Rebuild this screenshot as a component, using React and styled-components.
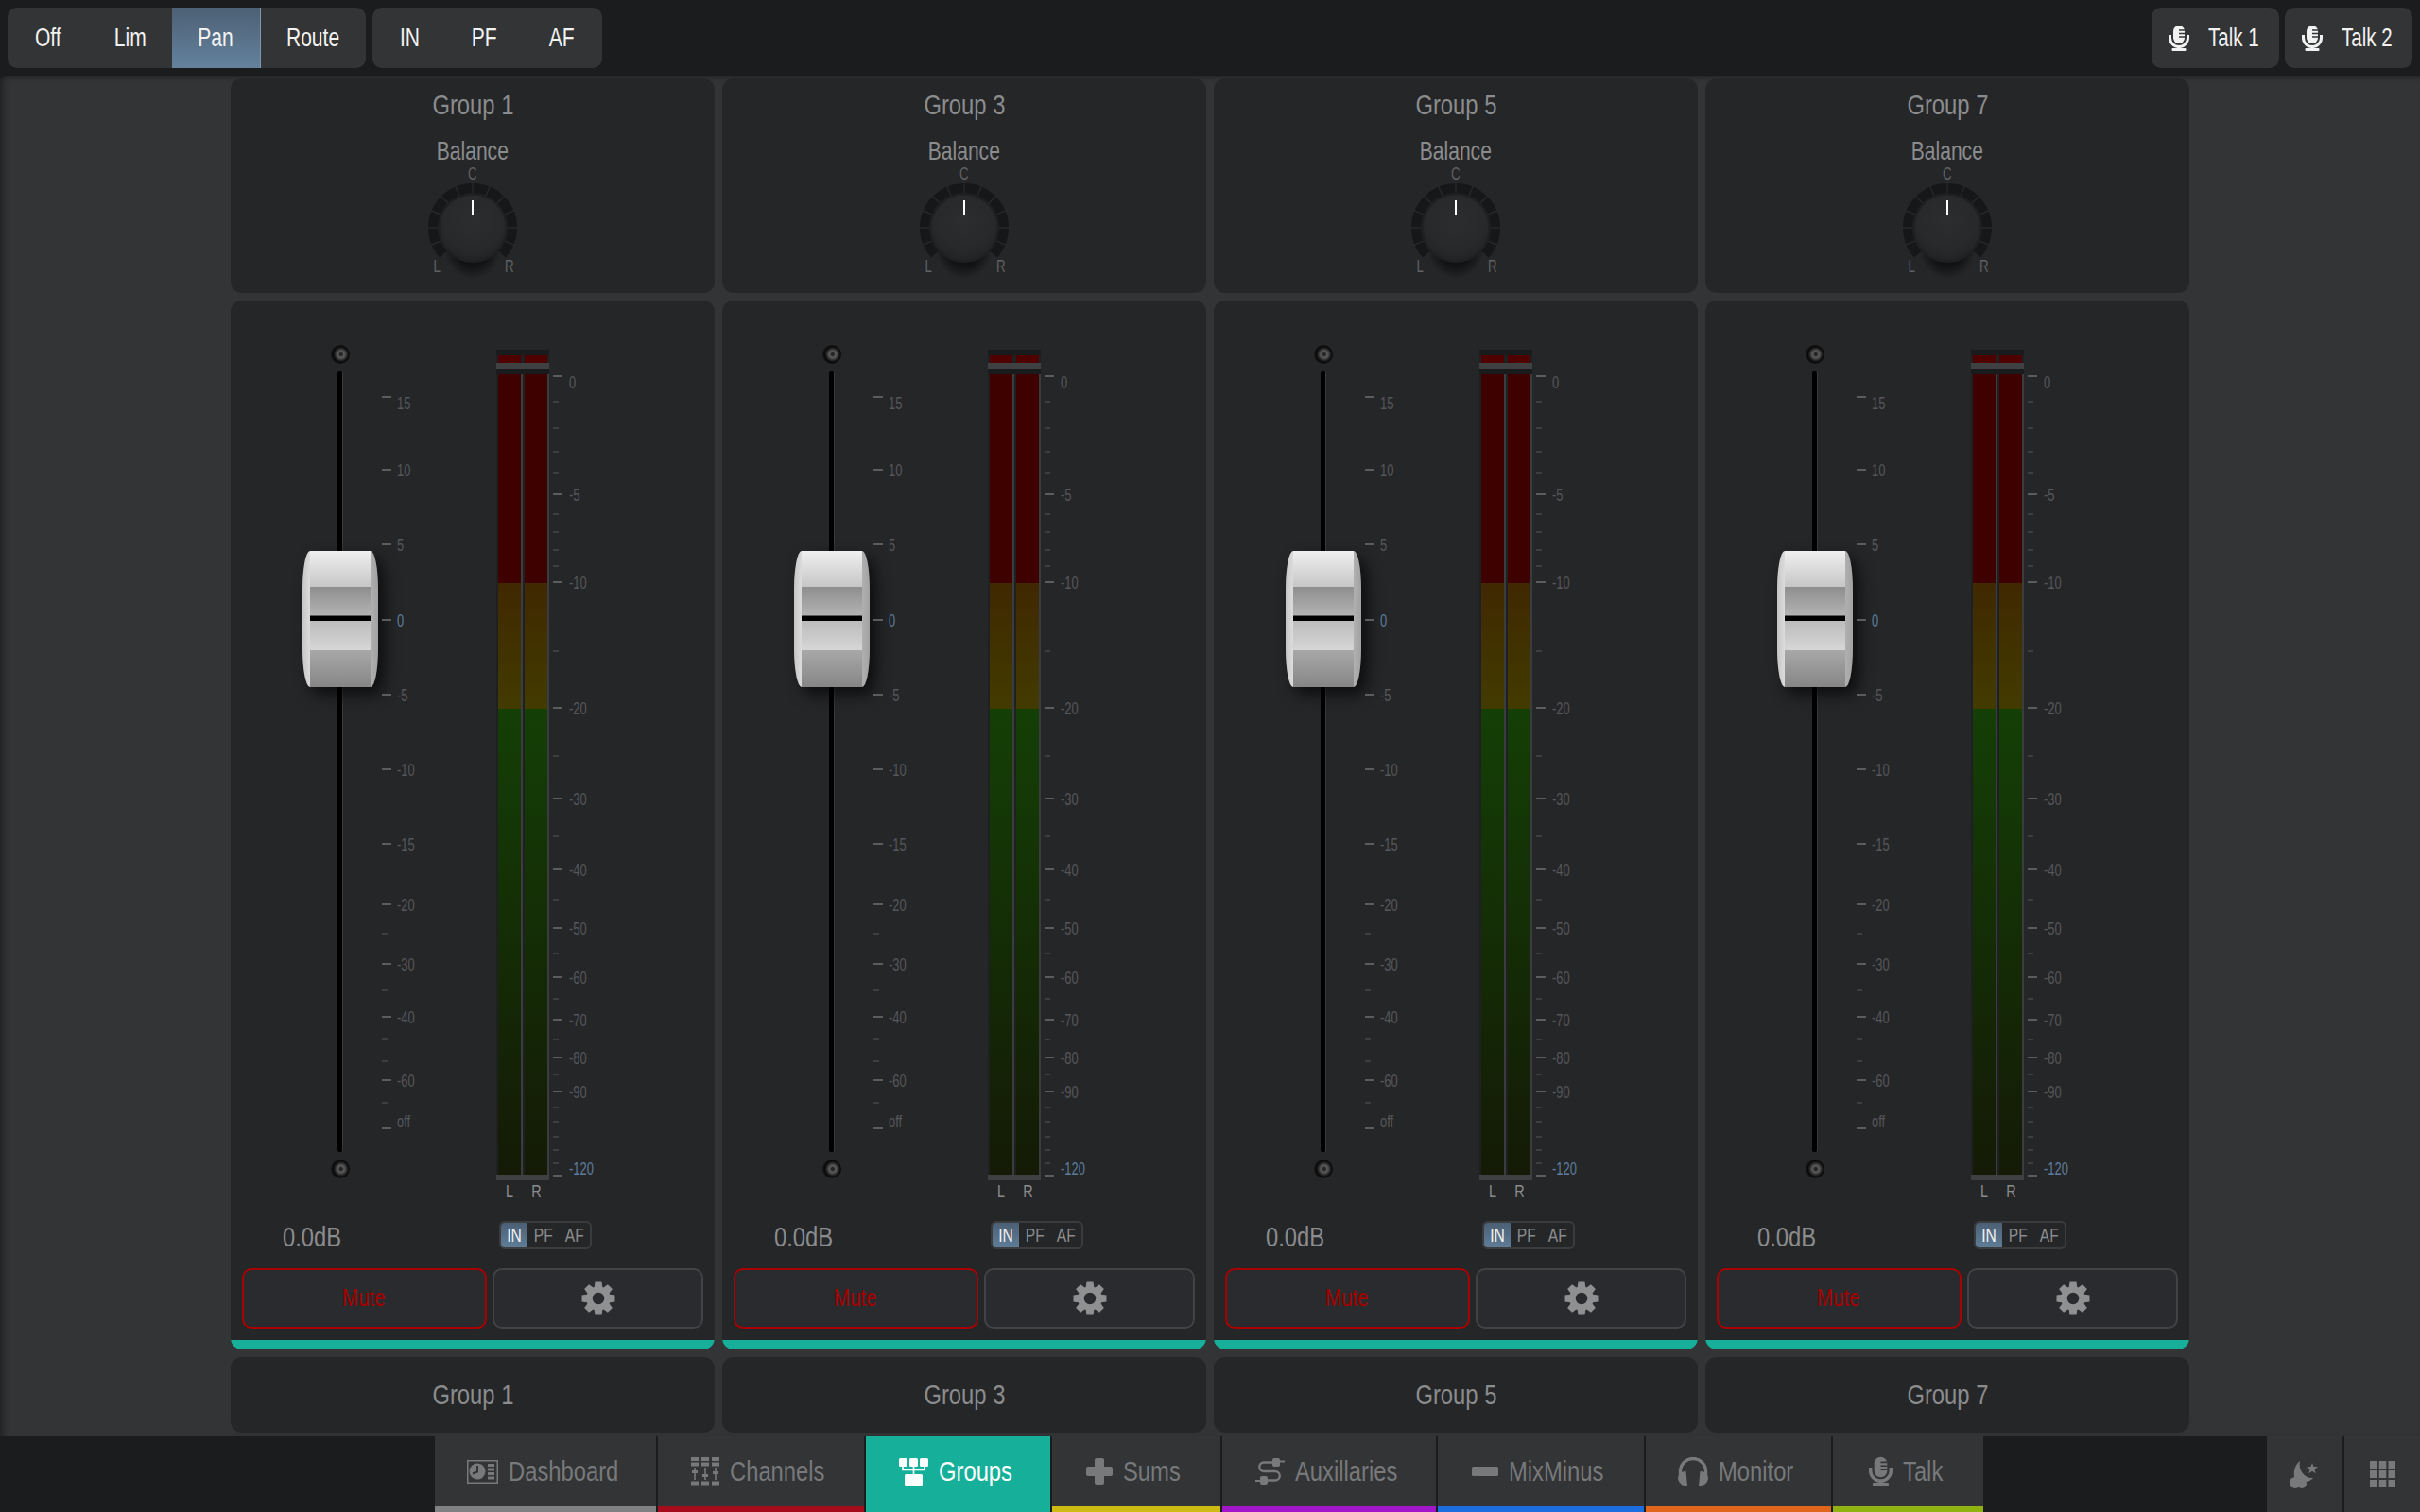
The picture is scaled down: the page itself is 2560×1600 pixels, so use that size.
import React from "react";
import styled, { createGlobalStyle } from "styled-components";

const FONT = `"Liberation Sans", Arial, sans-serif`;

const Global = createGlobalStyle`
  html, body { margin: 0; padding: 0; background: #323436; }
  * { box-sizing: border-box; }
  body { font-family: ${FONT}; }
`;

const Page = styled.div`
  width: 2560px;
  height: 1600px;
  display: flex;
  flex-direction: column;
  overflow: hidden;
`;

/* The reference uses a narrow grotesque: the same drawing squeezed horizontally. */
const Narrow = styled.span`
  display: inline-block;
  white-space: nowrap;
  width: ${(p) => (p.$w ? `${p.$w}px` : "auto")};
  transform: scaleX(${(p) => p.$x || 0.82});
  transform-origin: ${(p) => (p.$w ? "left" : "center")} center;
`;

const TopBar = styled.header`
  height: 80px;
  flex: none;
  display: flex;
  justify-content: space-between;
  padding: 8px;
  background: #1b1c1e;
`;
const BarGroup = styled.div`
  display: flex;
  gap: ${(p) => p.$gap}px;
`;
const Segment = styled.div`
  display: flex;
  height: 64px;
  background: #323436;
  border-radius: 10px;
  overflow: hidden;
`;
const SegmentButton = styled.div`
  width: ${(p) => p.$w}px;
  display: flex;
  align-items: center;
  justify-content: center;
  font-size: 27px;
  color: #f2f2f2;
  background: ${(p) => (p.$active ? "linear-gradient(180deg,#4c6074,#64829e)" : "transparent")};
  border-right: ${(p) => (p.$active ? "1px solid #7f97ad" : "none")};
`;
const TalkButton = styled.div`
  width: 135px;
  height: 64px;
  display: flex;
  align-items: center;
  gap: 20px;
  padding-left: 18px;
  background: #323436;
  border-radius: 10px;
  font-size: 27px;
  color: #f2f2f2;
`;

const Mixer = styled.main`
  flex: 1;
  display: flex;
  justify-content: center;
  gap: 8px;
  padding: 3px 0 4px;
  background: #323436;
  box-shadow: inset 8px 0 10px -6px rgba(0, 0, 0, 0.45), inset 0 6px 6px -5px rgba(0, 0, 0, 0.35);
`;
const Strip = styled.section`
  width: 512px;
  display: flex;
  flex-direction: column;
  gap: 8px;
`;
const HeadCard = styled.div`
  height: 227px;
  display: flex;
  flex-direction: column;
  align-items: center;
  padding-top: 12px;
  background: #252628;
  border-radius: 12px;
`;
const GroupTitle = styled.div`
  font-size: 29px;
  line-height: 32px;
  color: #8b8c8e;
`;
const BalanceLabel = styled.div`
  margin-top: 18px;
  font-size: 27px;
  line-height: 30px;
  color: #8b8c8e;
`;
const KnobBox = styled.div`
  position: relative;
  margin-top: 6px;
  width: 120px;
  height: 120px;
`;
const KnobMark = styled.span`
  position: absolute;
  left: ${(p) => p.$x}px;
  top: ${(p) => p.$y}px;
  width: 20px;
  margin-left: -10px;
  text-align: center;
  font-size: 19px;
  line-height: 18px;
  color: #5f6163;
`;

const ChannelCard = styled.div`
  flex: none;
  height: 1110px;
  display: flex;
  flex-direction: column;
  background: #252628;
  border-radius: 12px;
  overflow: hidden;
`;
const ChannelBody = styled.div`
  flex: 1;
  display: flex;
  align-items: flex-start;
`;
const FaderColumn = styled.div`
  position: relative;
  width: 80px;
  margin: 47px 0 0 76px;
  display: flex;
  flex-direction: column;
  align-items: center;
  gap: 8px;
`;
const Screw = styled.div`
  width: 20px;
  height: 20px;
  border-radius: 50%;
  background: radial-gradient(circle at 54% 50%, #262626 0 1.5px, #5c5c5c 3px, #444 5px, #222 6.5px, #090909 8.5px, #141414 10px);
`;
const Track = styled.div`
  width: 6px;
  height: 826px;
  background: #000;
  border-right: 1px solid #37393b;
  border-radius: 2px;
`;
const Handle = styled.div`
  position: absolute;
  left: 0;
  top: 218px;
  width: 80px;
  height: 144px;
  display: flex;
  border-radius: 8px / 40px;
  box-shadow: 7px 8px 16px rgba(0, 0, 0, 0.65);
`;
const HandleSide = styled.div`
  width: 8px;
  background: ${(p) => (p.$right ? "linear-gradient(90deg,#b0b0b0,#a2a2a2)" : "linear-gradient(90deg,#c6c6c6,#dcdcdc)")};
  border-radius: ${(p) => (p.$right ? "0 8px 8px 0 / 0 40px 40px 0" : "8px 0 0 8px / 40px 0 0 40px")};
`;
const HandleFace = styled.div`
  flex: 1;
  display: flex;
  flex-direction: column;
`;
const HandleBand = styled.div`
  height: ${(p) => p.$h}px;
  background: linear-gradient(180deg, ${(p) => p.$from}, ${(p) => p.$to});
`;
const HandleSlit = styled.div`
  height: 5px;
  background: #000;
  box-shadow: 0 -1px 0 #5c5c5c, 0 1px 0 #8a8a8a;
`;

const Scale = styled.div`
  position: relative;
  flex: none;
  width: ${(p) => p.$w}px;
  height: 900px;
  margin-left: 4px;
  margin-top: ${(p) => p.$top}px;
`;
const ScaleTick = styled.i`
  position: absolute;
  left: 0;
  height: 2px;
  width: ${(p) => (p.$major ? 10 : 6)}px;
  background: ${(p) => (p.$major ? "#5a5c5e" : "#3c3e40")};
`;
const ScaleLabel = styled.span`
  position: absolute;
  left: ${(p) => p.$left}px;
  font-size: 19px;
  line-height: 18px;
  white-space: nowrap;
  transform: scaleX(0.68);
  transform-origin: left center;
  color: ${(p) => (p.$blue ? "#5d7d9c" : "#55575a")};
`;

const MeterColumn = styled.div`
  flex: none;
  width: 56px;
  margin: 52px 0 0 81px;
  display: flex;
  flex-direction: column;
`;
const MeterBars = styled.div`
  display: flex;
`;
const MeterChannel = styled.div`
  width: 28px;
  display: flex;
  flex-direction: column;
  background: #1e2022;
`;
const PeakStrip = styled.div`
  height: ${(p) => p.$h}px;
  background: ${(p) => p.$c};
  margin: ${(p) => (p.$inset ? "0 2px" : "0")};
`;
const MeterBar = styled.div`
  height: 847px;
  margin-left: 2px;
  background: linear-gradient(180deg, #3f0000 0, #3f0000 26.1%, #402800 26.1%, #423b00 41.8%, #143f06 41.8%, #141a06 100%);
  border-right: 2px solid #3a3c3e;
  background-clip: padding-box;
`;
const MeterNames = styled.div`
  display: flex;
  padding-top: 2px;
  font-size: 18px;
  line-height: 20px;
  color: #8b8c8e;
`;
const MeterName = styled.span`
  width: 28px;
  text-align: center;
`;

const ValueRow = styled.div`
  height: 30px;
  margin-bottom: 20px;
  display: flex;
  align-items: center;
`;
const GainValue = styled.div`
  width: 229px;
  margin-left: 55px;
  font-size: 29px;
  line-height: 34px;
  padding-top: 4px;
  color: #8b8c8e;
`;
const SourceSwitch = styled.div`
  width: 98px;
  height: 30px;
  display: flex;
  border: 2px solid #3a3c3e;
  border-radius: 6px;
  overflow: hidden;
`;
const SourceOption = styled.div`
  flex: ${(p) => (p.$active ? "0 0 28px" : "1")};
  display: flex;
  align-items: center;
  justify-content: center;
  font-size: 20px;
  color: ${(p) => (p.$active ? "#f2f2f2" : "#8b8c8e")};
  background: ${(p) => (p.$active ? "linear-gradient(180deg,#4c6074,#5f7d98)" : "transparent")};
`;
const ButtonRow = styled.div`
  height: 64px;
  display: flex;
  gap: 6px;
  padding: 0 12px;
  margin-bottom: 12px;
`;
const OutlineButton = styled.div`
  width: ${(p) => p.$w}px;
  display: flex;
  align-items: center;
  justify-content: center;
  padding-bottom: ${(p) => (p.$text ? 2 : 0)}px;
  padding-right: ${(p) => (p.$text ? 2 : 0)}px;
  background: #2a2b2e;
  border: 2px solid ${(p) => p.$line};
  border-radius: 10px;
  font-size: 26px;
  color: #a40000;
`;
const TealBar = styled.div`
  height: 10px;
  flex: none;
  background: #17ae9a;
`;
const FootCard = styled.div`
  height: 80px;
  display: flex;
  align-items: center;
  justify-content: center;
  background: #252628;
  border-radius: 12px;
  font-size: 29px;
  color: #8b8c8e;
`;

const Nav = styled.nav`
  height: 80px;
  flex: none;
  display: flex;
  gap: 2px;
  padding-left: 460px;
  background: #1b1c1e;
`;
const NavItem = styled.div`
  width: ${(p) => p.$w}px;
  display: flex;
  align-items: center;
  justify-content: center;
  gap: 11px;
  padding-right: ${(p) => (p.$line ? 6 : 0)}px;
  margin-left: ${(p) => (p.$push ? "auto" : "0")};
  font-size: 29px;
  color: ${(p) => (p.$active ? "#ffffff" : "#77797b")};
  background: ${(p) => (p.$active ? "#16b09a" : "#323436")};
  border-bottom: ${(p) => (p.$line ? `6px solid ${p.$line}` : "none")};
`;

/* drawings */
const MicIcon = ({ w = 22, h = 27, slot = "#323436" }) => (
  <svg width={w} height={h} viewBox="0 0 22 27" fill="currentColor" style={{ flex: "none" }}>
    <rect x="5" y="0" width="12" height="19" rx="6" />
    <path d="M11 5h6M11 8.500h6M11 12h6" stroke={slot} strokeWidth="1.400" />
    <path d="M1.500 10v3a9.500 9.500 0 0 0 19 0v-3" fill="none" stroke="currentColor" strokeWidth="3" />
    <rect x="9.500" y="21" width="3" height="3" />
    <rect x="3.500" y="24" width="15" height="3" rx="1" />
  </svg>
);
const DashboardIcon = () => (
  <svg width="33" height="25" viewBox="0 0 33 25" fill="currentColor">
    <rect x="0.750" y="0.750" width="31.500" height="23.500" fill="none" stroke="currentColor" strokeWidth="1.500" />
    <circle cx="11" cy="12" r="8.500" />
    <path d="M11 6v6.500l-5 2" fill="none" stroke="#323436" strokeWidth="2" />
    <path d="M22 4h7v3h-7zM22 8.500h7v3h-7zM22 13h7v3h-7zM22 17.500h7v3h-7z" />
  </svg>
);
const ChannelsIcon = () => (
  <svg width="30" height="30" viewBox="0 0 30 30" fill="currentColor">
    <path d="M0 0h8v4H0zM11 0h8v4h-8zM22 0h8v4h-8zM0 5.500h8v4H0zM11 5.500h8v4h-8zM22 5.500h8v4h-8zM0 25.500h8v4H0zM11 25.500h8v4h-8zM22 25.500h8v4h-8z" />
    <path d="M3.200 11h1.600v13H3.200zM14.200 11h1.600v13h-1.600zM25.200 11h1.600v13h-1.600z" />
    <path d="M1 14h6v3H1zM12 18h6v3h-6zM23 15h6v3h-6z" />
  </svg>
);
const GroupsIcon = () => (
  <svg width="31" height="29" viewBox="0 0 31 29" fill="currentColor">
    <rect x="0" y="0" width="9" height="9" rx="1.500" />
    <rect x="11" y="0" width="9" height="9" rx="1.500" />
    <rect x="22" y="0" width="9" height="9" rx="1.500" />
    <path d="M4 9v3.500h23V9M15.500 9v8" fill="none" stroke="currentColor" strokeWidth="1.600" />
    <rect x="6" y="17" width="19" height="12" rx="1.500" />
  </svg>
);
const PlusIcon = () => (
  <svg width="28" height="28" viewBox="0 0 28 28" fill="currentColor">
    <path d="M11 0h6a2 2 0 0 1 2 2v7h7a2 2 0 0 1 2 2v6a2 2 0 0 1-2 2h-7v7a2 2 0 0 1-2 2h-6a2 2 0 0 1-2-2v-7H2a2 2 0 0 1-2-2v-6a2 2 0 0 1 2-2h7V2a2 2 0 0 1 2-2z" />
  </svg>
);
const AuxIcon = () => (
  <svg width="31" height="28" viewBox="0 0 31 28" fill="currentColor">
    <path d="M20 4.500H9a4.700 4.700 0 0 0 0 9.500h12a4.700 4.700 0 0 1 0 9.500H11" fill="none" stroke="currentColor" strokeWidth="2.400" />
    <rect x="18" y="0" width="8" height="9" rx="2" />
    <rect x="25" y="2.500" width="6" height="2" />
    <rect x="5" y="19" width="8" height="9" rx="2" />
    <rect x="0" y="23" width="6" height="2" />
  </svg>
);
const MinusIcon = () => (
  <svg width="28" height="10" viewBox="0 0 28 10" fill="currentColor">
    <rect width="28" height="10" rx="1.500" />
  </svg>
);
const HeadphonesIcon = () => (
  <svg width="32" height="31" viewBox="0 0 32 31" fill="currentColor">
    <path d="M2.500 19v-4a13.500 13.500 0 0 1 27 0v4" fill="none" stroke="currentColor" strokeWidth="3.400" />
    <path d="M8.500 15l1.500 15H7c-4-.5-7-4.500-7-8 0-3.500 3.500-7 8.500-7zM23.500 15l-1.500 15h3c4-.5 7-4.500 7-8 0-3.500-3.500-7-8.500-7z" />
  </svg>
);
const MoonIcon = () => (
  <svg width="32" height="29" viewBox="0 0 32 29" fill="currentColor">
    <path d="M11 0C6 4 4 10 5 17c3 5 10 7 16 4 2-1 3-2 4-3-9 1-16-8-14-18z" />
    <circle cx="6" cy="23" r="6" />
    <circle cx="13" cy="24" r="5" />
    <path d="M24 2l1.500 4 4.500.3-3.500 2.700 1.200 4.300-3.700-2.500-3.700 2.500L21.500 9 18 6.300l4.500-.3z" />
  </svg>
);
const GridIcon = () => (
  <svg width="27" height="28" viewBox="0 0 27 28" fill="currentColor">
    <path d="M0 0h7.500v8H0zM9.750 0h7.500v8h-7.500zM19.500 0H27v8h-7.500zM0 10h7.500v8H0zM9.750 10h7.500v8h-7.500zM19.500 10H27v8h-7.500zM0 20h7.500v8H0zM9.750 20h7.500v8h-7.500zM19.500 20H27v8h-7.500z" />
  </svg>
);
const GearIcon = () => (
  <svg width="36" height="36" viewBox="0 0 36 36" fill="#8f9092">
    {[0, 45, 90, 135, 180, 225, 270, 315].map((a) => (
      <path key={a} d="M14.500 0.500h7l1 7h-9z" transform={`rotate(${a} 18 18)`} />
    ))}
    <circle cx="18" cy="18" r="9.500" fill="none" stroke="#8f9092" strokeWidth="6.500" />
  </svg>
);
const arcPoint = (r, deg) => {
  const t = ((deg - 90) * Math.PI) / 180;
  return [60 + r * Math.cos(t), 60 + r * Math.sin(t)];
};
const KnobIcon = ({ id }) => {
  const [sx, sy] = arcPoint(41.5, -132);
  const [ex, ey] = arcPoint(41.5, 132);
  const seps = [-112.5, -90, -67.5, -45, -22.5, 0, 22.5, 45, 67.5, 90, 112.5];
  return (
    <svg width="120" height="120" viewBox="0 0 120 120">
      <defs>
        <radialGradient id={`${id}s`} cx="50%" cy="50%" r="50%">
          <stop offset="0%" stopColor="#000" stopOpacity="0.8" />
          <stop offset="60%" stopColor="#000" stopOpacity="0.5" />
          <stop offset="100%" stopColor="#000" stopOpacity="0" />
        </radialGradient>
        <radialGradient id={`${id}f`} cx="50%" cy="38%" r="65%">
          <stop offset="0%" stopColor="#2c2d2f" />
          <stop offset="70%" stopColor="#28292b" />
          <stop offset="100%" stopColor="#212224" />
        </radialGradient>
      </defs>
      <path d={`M${sx} ${sy}A41.500 41.500 0 1 1 ${ex} ${ey}`} fill="none" stroke="#161718" strokeWidth="11" />
      {seps.map((a) => {
        const [x1, y1] = arcPoint(36, a);
        const [x2, y2] = arcPoint(48, a);
        return <line key={a} x1={x1} y1={y1} x2={x2} y2={y2} stroke="#2a2b2d" strokeWidth="1.200" />;
      })}
      <ellipse cx="60" cy="82" rx="30" ry="32" fill={`url(#${id}s)`} />
      <circle cx="60" cy="60" r="37" fill="#1f2022" />
      <circle cx="60" cy="60" r="34.500" fill={`url(#${id}f)`} />
      <rect x="59" y="31" width="2" height="16" fill="#ffffff" />
    </svg>
  );
};

/* data */
const FADER_TICKS = [
  [419, "15", 7], [496, "10", 1], [575, "5", 1], [655, "0", 1, true], [734, "-5", 1], [813, "-10", 1],
  [892, "-15", 1], [956, "-20", 1], [987], [1019, "-30", 1], [1047], [1075, "-40", 1], [1098], [1122],
  [1142, "-60", 1], [1166], [1193, "off", -7],
];
const METER_TICKS = [
  [397, "0", 7], [424], [452], [477], [500], [522, "-5", 1], [543], [562], [581], [598], [615, "-10", 1],
  [688], [748, "-20", 1], [799], [844, "-30", 1], [884], [919, "-40", 1], [951], [981, "-50", 1], [1008],
  [1033, "-60", 1], [1056], [1078, "-70", 1], [1099], [1118, "-80", 1], [1136], [1154, "-90", 1], [1171],
  [1186], [1202], [1216], [1230], [1243, "-120", -7, true],
];

const ScaleMarks = ({ ticks, origin, width, top, labelLeft }) => (
  <Scale $w={width} $top={top}>
    {ticks.map(([y, label, dy, blue]) => (
      <React.Fragment key={y}>
        <ScaleTick $major={!!label} style={{ top: y - origin }} />
        {label && (
          <ScaleLabel $left={labelLeft} $blue={blue} style={{ top: y - origin + dy - 8 }}>
            {label}
          </ScaleLabel>
        )}
      </React.Fragment>
    ))}
  </Scale>
);

const MeterLane = () => (
  <MeterChannel>
    <PeakStrip $h={6} $c="#1a1b1c" />
    <PeakStrip $h={8} $c="#4f0000" $inset />
    <PeakStrip $h={6} $c="#3e4042" />
    <PeakStrip $h={6} $c="#1a1b1c" />
    <MeterBar />
    <PeakStrip $h={6} $c="#3e4042" />
  </MeterChannel>
);

const ChannelStrip = ({ name }) => (
  <Strip>
    <HeadCard>
      <GroupTitle><Narrow $x={0.82}>{name}</Narrow></GroupTitle>
      <BalanceLabel><Narrow $x={0.78}>Balance</Narrow></BalanceLabel>
      <KnobBox>
        <KnobIcon id={name.replace(" ", "")} />
        <KnobMark $x={60} $y={-6}><Narrow $x={0.7}>C</Narrow></KnobMark>
        <KnobMark $x={22} $y={92}><Narrow $x={0.7}>L</Narrow></KnobMark>
        <KnobMark $x={99} $y={92}><Narrow $x={0.7}>R</Narrow></KnobMark>
      </KnobBox>
    </HeadCard>
    <ChannelCard>
      <ChannelBody>
        <FaderColumn>
          <Screw />
          <Track />
          <Screw />
          <Handle>
            <HandleSide />
            <HandleFace>
              <HandleBand $h={38} $from="#f0f0f0" $to="#c6c6c6" />
              <HandleBand $h={31} $from="#8e8e8e" $to="#b4b4b4" />
              <HandleSlit />
              <HandleBand $h={31} $from="#bcbcbc" $to="#d6d6d6" />
              <HandleBand $h={39} $from="#a8a8a8" $to="#868686" />
            </HandleFace>
            <HandleSide $right />
          </Handle>
        </FaderColumn>
        <ScaleMarks ticks={FADER_TICKS} origin={365} width={40} top={47} labelLeft={16} />
        <MeterColumn>
          <MeterBars>
            <MeterLane />
            <MeterLane />
          </MeterBars>
          <MeterNames>
            <MeterName><Narrow $x={0.8}>L</Narrow></MeterName>
            <MeterName><Narrow $x={0.8}>R</Narrow></MeterName>
          </MeterNames>
        </MeterColumn>
        <ScaleMarks ticks={METER_TICKS} origin={370} width={50} top={52} labelLeft={17} />
      </ChannelBody>
      <ValueRow>
        <GainValue><Narrow $w={64}>0.0dB</Narrow></GainValue>
        <SourceSwitch>
          <SourceOption $active><Narrow $x={0.78}>IN</Narrow></SourceOption>
          <SourceOption><Narrow $x={0.78}>PF</Narrow></SourceOption>
          <SourceOption><Narrow $x={0.78}>AF</Narrow></SourceOption>
        </SourceSwitch>
      </ValueRow>
      <ButtonRow>
        <OutlineButton $w={259} $line="#a90000" $text><Narrow $x={0.79}>Mute</Narrow></OutlineButton>
        <OutlineButton $w={223} $line="#414345"><GearIcon /></OutlineButton>
      </ButtonRow>
      <TealBar />
    </ChannelCard>
    <FootCard><Narrow $x={0.82}>{name}</Narrow></FootCard>
  </Strip>
);

const NAV = [
  ["Dashboard", 234, 116, "#808183", <DashboardIcon />],
  ["Channels", 218, 101, "#a60d1c", <ChannelsIcon />],
  ["Groups", 195, 78, "#16b09a", <GroupsIcon />, true],
  ["Sums", 178, 61, "#cdbb14", <PlusIcon />],
  ["Auxillaries", 226, 109, "#a116c9", <AuxIcon />],
  ["MixMinus", 218, 101, "#1c6de0", <MinusIcon />],
  ["Monitor", 196, 80, "#e0661c", <HeadphonesIcon />],
  ["Talk", 159, 42, "#90b312", <MicIcon w={25} h={32} />],
];

const SEGMENTS_A = [["Off", 86], ["Lim", 88], ["Pan", 94, true], ["Route", 111]];
const SEGMENTS_B = [["IN", 78], ["PF", 80], ["AF", 85]];

export default function App() {
  const segment = ([label, w, active]) => (
    <SegmentButton key={label} $w={w} $active={active}>
      <Narrow $x={0.78}>{label}</Narrow>
    </SegmentButton>
  );
  return (
    <Page>
      <Global />
      <TopBar>
        <BarGroup $gap={7}>
          <Segment>{SEGMENTS_A.map(segment)}</Segment>
          <Segment>{SEGMENTS_B.map(segment)}</Segment>
        </BarGroup>
        <BarGroup $gap={6}>
          <TalkButton><MicIcon /><Narrow $w={56} $x={0.76}>Talk 1</Narrow></TalkButton>
          <TalkButton><MicIcon /><Narrow $w={56} $x={0.76}>Talk 2</Narrow></TalkButton>
        </BarGroup>
      </TopBar>
      <Mixer>
        {["Group 1", "Group 3", "Group 5", "Group 7"].map((n) => (
          <ChannelStrip key={n} name={n} />
        ))}
      </Mixer>
      <Nav>
        {NAV.map(([label, w, tw, line, icon, active]) => (
          <NavItem key={label} $w={w} $line={line} $active={active}>
            {icon}
            <Narrow $w={tw} $x={0.82}>{label}</Narrow>
          </NavItem>
        ))}
        <NavItem $w={80} $push><MoonIcon /></NavItem>
        <NavItem $w={80}><GridIcon /></NavItem>
      </Nav>
    </Page>
  );
}
